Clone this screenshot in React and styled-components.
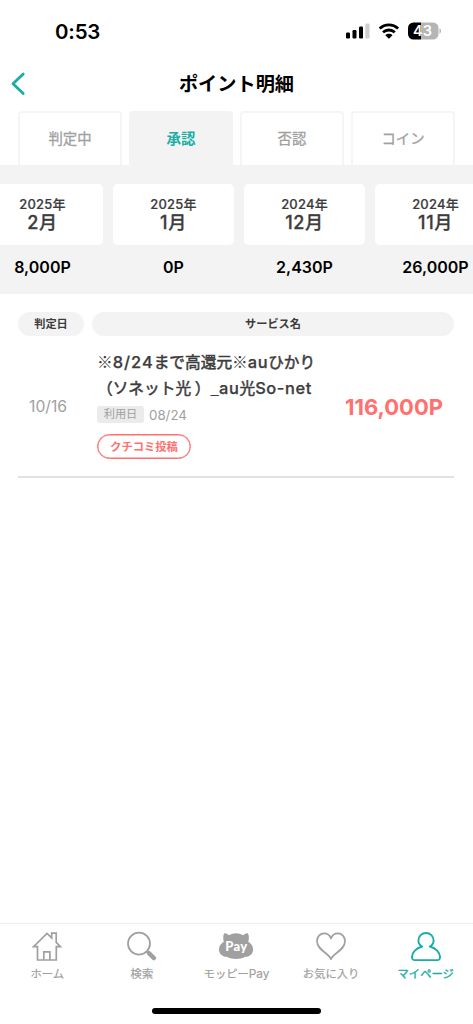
import React from "react";
import styled, { createGlobalStyle, css } from "styled-components";

const teal = "#19ada5";
const gray = "#a0a0a0";
const band = "#f3f3f3";
const coral = "#ff706e";
const ink = "#3c3c3c";

const GlobalStyle = createGlobalStyle`
  * { box-sizing: border-box; }
  body {
    margin: 0;
    background: #fff;
    font-family: Inter, "Noto Sans CJK JP", sans-serif;
    font-feature-settings: "calt" 0;
    overflow: hidden;
  }
`;

const Screen = styled.div`
  width: 473px;
  height: 1024px;
  display: flex;
  flex-direction: column;
  background: #fff;
  overflow: hidden;
`;

const StatusBar = styled.div`
  height: 62px;
  padding: 0 32px 0 55px;
  display: flex;
  align-items: center;
  justify-content: space-between;
`;

const Clock = styled.span`
  font-size: 20.5px;
  line-height: 24px;
  font-weight: 600;
  letter-spacing: -0.2px;
  padding-top: 1px;
`;

const StatusIcons = styled.svg`
  display: block;
  width: 96px;
  height: 20px;
`;

const Header = styled.header`
  height: 49px;
  display: grid;
  grid-template-columns: 40px 1fr 40px;
  align-items: start;
  padding-top: 9px;
`;

const BackButton = styled.button`
  border: 0;
  background: none;
  padding: 0 0 0 9px;
  height: 26px;
  display: flex;
  align-items: center;
`;

const Title = styled.h1`
  margin: 0;
  font-size: 19.2px;
  line-height: 27px;
  font-weight: 700;
  text-align: center;
`;

const Tabs = styled.nav`
  display: flex;
  gap: 7px;
  padding: 0 18px;
  height: 54px;
`;

const Tab = styled.div`
  width: 104px;
  display: flex;
  align-items: center;
  justify-content: center;
  border: 2px solid #f5f5f5;
  border-bottom: 0;
  border-radius: 4px 4px 0 0;
  padding-bottom: 3px;
  font-size: 14.4px;
  color: ${gray};
  -webkit-text-stroke: 0.3px currentColor;
  ${(p) => p.$active && css`
    background: ${band};
    border-color: ${band};
    color: ${teal};
    font-weight: 700;
    -webkit-text-stroke: 0;
  `}
`;

const MonthStrip = styled.section`
  height: 129px;
  background: ${band};
  padding-top: 19px;
  display: flex;
  gap: 10px;
  overflow: hidden;
`;

const MonthColumn = styled.div`
  flex: 0 0 121px;
  text-align: center;
  &:first-child { margin-left: -18px; }
`;

const MonthCard = styled.div`
  height: 61px;
  background: #fff;
  border-radius: 5px;
  padding-top: 12px;
  color: ${ink};
`;

const Year = styled.div`
  font-size: 13px;
  line-height: 17px;
  font-weight: 500;
  letter-spacing: 0.2px;
  -webkit-text-stroke: 0.2px currentColor;
`;

const Month = styled.div`
  font-size: 18px;
  line-height: 19px;
  font-weight: 500;
  letter-spacing: 0.7px;
  -webkit-text-stroke: 0.3px currentColor;
`;

const MonthPoints = styled.div`
  font-size: 16px;
  line-height: 22px;
  margin-top: 11px;
  font-weight: 600;
`;

const Statement = styled.main`
  flex: 1;
  padding: 18px 19px 0 18px;
`;

const ColumnHeads = styled.div`
  display: grid;
  grid-template-columns: 66px 1fr;
  gap: 8px;
`;

const Pill = styled.div`
  height: 24px;
  border-radius: 12px;
  background: ${band};
  color: ${ink};
  font-size: 11.2px;
  line-height: 24px;
  font-weight: 700;
  text-align: center;
`;

const Entry = styled.article`
  height: 142px;
  display: flex;
  border-bottom: 2px solid #e2e2e2;
`;

const EntryDate = styled.div`
  width: 79px;
  padding: 60px 0 0 11px;
  font-size: 15.7px;
  line-height: 22px;
  color: ${gray};
`;

const EntryBody = styled.div`
  width: 237px;
  padding-top: 13px;
`;

const ServiceName = styled.div`
  height: 25.5px;
  font-family: "Noto Sans CJK JP", sans-serif;
  font-size: 15.7px;
  line-height: 25.5px;
  font-weight: 400;
  color: ${ink};
  white-space: nowrap;
  -webkit-text-stroke: 0.5px currentColor;
`;

const Latin = styled.span`
  font-family: Inter, sans-serif;
  font-size: 16.4px;
  font-weight: 500;
  letter-spacing: ${(p) => p.$spacing || 0}px;
  -webkit-text-stroke: 0.25px currentColor;
`;

const Light = styled.span`
  -webkit-text-stroke: 0;
`;

const UseDate = styled.div`
  display: flex;
  align-items: center;
  gap: 5px;
  margin-top: 6px;
  height: 17px;
  font-size: 13.3px;
  color: ${gray};
`;

const Tag = styled.span`
  width: 47px;
  height: 17px;
  border-radius: 3px;
  background: #ebebeb;
  font-size: 11.2px;
  line-height: 17px;
  text-align: center;
`;

const ReviewButton = styled.button`
  display: block;
  width: 94px;
  height: 25px;
  margin-top: 11px;
  padding: 0;
  border: 1.5px solid ${coral};
  border-radius: 13px;
  background: #fff;
  color: ${coral};
  font: inherit;
  font-size: 11.3px;
  line-height: 22px;
  font-weight: 700;
  text-align: center;
  box-shadow: inset 0 0 0 0.5px ${coral};
`;

const EntryPoints = styled.div`
  flex: 1;
  padding: 56px 11px 0 0;
  font-size: 22px;
  line-height: 30px;
  font-weight: 700;
  text-align: right;
  color: ${coral};
`;

const TabBar = styled.nav`
  height: 101px;
  border-top: 1px solid #eeeeee;
  display: flex;
  flex-direction: column;
  justify-content: space-between;
`;

const TabBarItems = styled.div`
  display: grid;
  grid-template-columns: repeat(5, 1fr);
`;

const TabBarItem = styled.div`
  display: flex;
  flex-direction: column;
  align-items: center;
  padding-top: 6px;
  color: ${(p) => (p.$active ? teal : gray)};
  font-size: 11.3px;
  line-height: 18px;
  -webkit-text-stroke: ${(p) => (p.$active ? 0.35 : 0.2)}px currentColor;
  white-space: nowrap;
  svg { display: block; margin-bottom: 1px; }
`;

const LatinLabel = styled.span`
  font-size: 11.8px;
`;

const NavLabel = styled.span`
  height: 18px;
`;

const HomeIndicator = styled.div`
  width: 169px;
  height: 6px;
  border-radius: 3px;
  background: #000;
  margin: 0 auto 10px;
`;

const PayText = styled.text`
  font: 900 13px Lato, sans-serif;
  fill: #fff;
  -webkit-text-stroke: 0;
`;

const BatteryText = styled.text`
  font: 600 14.5px Inter, sans-serif;
  fill: #fff;
`;

const navIcon = { width: 36, height: 34, viewBox: "0 0 36 34", fill: "none", stroke: "currentColor" };

const HomeIcon = () => (
  <svg {...navIcon} strokeWidth="1.7">
    <path d="M8.5 30V16.6H4.6L18 3.4l4.7 4.5V3.2h4.5v9.2l4.2 4.2h-4.1V30Z" />
    <path d="M14.8 30v-8.2h6.1V30" />
  </svg>
);

const SearchIcon = () => (
  <svg {...navIcon}>
    <circle cx="15" cy="13.6" r="11" strokeWidth="1.8" />
    <path d="m22.8 21.5 1.5 1.5" strokeWidth="2" />
    <path d="m24.9 23.1 5.1 5" strokeWidth="4.3" strokeLinecap="round" />
  </svg>
);

const PayIcon = () => (
  <svg {...navIcon} stroke="none">
    <path fill="currentColor" d="M5.8 11.8C5 8.800 4.900 5.200 6.300 3.300c1.700-.3 3.300.7 4.600 1.900 4.300-2.700 10-2.700 14.300 0 1.300-1.200 2.900-2.200 4.600-1.900 1.400 1.900 1.300 5.500.5 8.500 2.900 1.700 4.800 4.200 4.800 7.600 0 4.300-3.400 7.400-7.800 7.300-5.700 3-12.900 3-18.500 0C4.400 26.800 1 23.700 1 19.400c0-3.400 1.900-5.900 4.800-7.600Z" />
    <PayText x="18.2" y="20.8" textAnchor="middle" textLength="22">Pay</PayText>
  </svg>
);

const HeartIcon = () => (
  <svg {...navIcon} strokeWidth="1.7" strokeLinejoin="round">
    <path d="M18 29.2C16.2 23.3 4 20.3 4 11.1c0-4.400 3.100-7.700 7.100-7.700 3.200 0 5.700 2 6.900 5 1.200-3 3.700-5 6.900-5 4 0 7.100 3.300 7.100 7.700 0 9.200-12.200 12.200-14 18.100Z" />
  </svg>
);

const PersonIcon = () => (
  <svg {...navIcon} strokeWidth="1.9" strokeLinejoin="round">
    <path d="M14.2 16.5C11.8 15.2 10.4 13 10.4 10.4a7.6 7.4 0 0 1 15.2 0c0 2.6-1.4 4.8-3.8 6.1 5.9 1.4 9.700 5.800 10.200 10.100.2 2.400-.8 3.500-3 3.500H7c-2.200 0-3.200-1.100-3-3.500.5-4.300 4.300-8.700 10.200-10.100Z" />
  </svg>
);

const months = [
  ["2025年", "2月", "8,000P"],
  ["2025年", "1月", "0P"],
  ["2024年", "12月", "2,430P"],
  ["2024年", "11月", "26,000P"],
];

const navItems = [
  ["ホーム", "", HomeIcon],
  ["検索", "", SearchIcon],
  ["モッピー", "Pay", PayIcon],
  ["お気に入り", "", HeartIcon],
  ["マイページ", "", PersonIcon],
];

export default function App() {
  return (
    <Screen>
      <GlobalStyle />
      <StatusBar>
        <Clock>0:53</Clock>
        <StatusIcons viewBox="0 0 96 20">
          <rect x="1" y="11.5" width="4" height="6" rx="1.2" />
          <rect x="7.5" y="9" width="4" height="8.5" rx="1.2" />
          <rect x="14" y="5.5" width="4" height="12" rx="1.2" />
          <rect x="20.3" y="2.5" width="4.2" height="15" rx="1.2" fill="#cfcfcf" />
          <g fill="none" stroke="#000" strokeWidth="2.8">
            <path d="M34.7 7.6c5.2-5 13.2-5 18.4 0" />
            <path d="M38 11.3c3.4-3.1 8.4-3.1 11.8 0" />
          </g>
          <path d="M40.3 14.2c2-1.9 5.2-1.9 7.2 0l-3.6 3.6Z" />
          <path d="M68.5 1.5H76v17h-7.5a5.5 5.5 0 0 1-5.5-5.5V7a5.5 5.5 0 0 1 5.5-5.5Z" />
          <path fill="#b5b5b5" d="M76 1.5h12A5.5 5.5 0 0 1 93.5 7v6a5.5 5.5 0 0 1-5.5 5.5H76Z" />
          <path fill="#b5b5b5" d="M94.5 7.3c2 .8 2 4.6 0 5.4Z" />
          <BatteryText x="77.5" y="15.2" textAnchor="middle" textLength="19">43</BatteryText>
        </StatusIcons>
      </StatusBar>
      <Header>
        <BackButton aria-label="戻る">
          <svg width="18" height="26" viewBox="0 0 18 26" fill="none" stroke={teal} strokeWidth="2.8" strokeLinecap="round" strokeLinejoin="round">
            <path d="M14.2 3 4 12.8l10.2 9.8" />
          </svg>
        </BackButton>
        <Title>ポイント明細</Title>
      </Header>
      <Tabs>
        <Tab>判定中</Tab>
        <Tab $active>承認</Tab>
        <Tab>否認</Tab>
        <Tab>コイン</Tab>
      </Tabs>
      <MonthStrip>
        {months.map(([year, month, points]) => (
          <MonthColumn key={year + month}>
            <MonthCard>
              <Year>{year}</Year>
              <Month>{month}</Month>
            </MonthCard>
            <MonthPoints>{points}</MonthPoints>
          </MonthColumn>
        ))}
      </MonthStrip>
      <Statement>
        <ColumnHeads>
          <Pill>判定日</Pill>
          <Pill>サービス名</Pill>
        </ColumnHeads>
        <Entry>
          <EntryDate>10/16</EntryDate>
          <EntryBody>
            <ServiceName>
              <Light>※</Light>
              <Latin $spacing={1}>8/24</Latin>
              まで高還元
              <Light>※</Light>
              <Latin $spacing={0.6}>au</Latin>
              ひかり
            </ServiceName>
            <ServiceName>
              （ソネット光 ）
              <Light>_</Light>
              <Latin $spacing={0.6}>au</Latin>
              光
              <Latin $spacing={0.6}>So-net</Latin>
            </ServiceName>
            <UseDate>
              <Tag>利用日</Tag>
              08/24
            </UseDate>
            <ReviewButton>クチコミ投稿</ReviewButton>
          </EntryBody>
          <EntryPoints>116,000P</EntryPoints>
        </Entry>
      </Statement>
      <TabBar>
        <TabBarItems>
          {navItems.map(([label, latin, Icon]) => (
            <TabBarItem key={label} $active={label === "マイページ"}>
              <Icon />
              <NavLabel>
                {label}
                {latin && <LatinLabel>{latin}</LatinLabel>}
              </NavLabel>
            </TabBarItem>
          ))}
        </TabBarItems>
        <HomeIndicator />
      </TabBar>
    </Screen>
  );
}
